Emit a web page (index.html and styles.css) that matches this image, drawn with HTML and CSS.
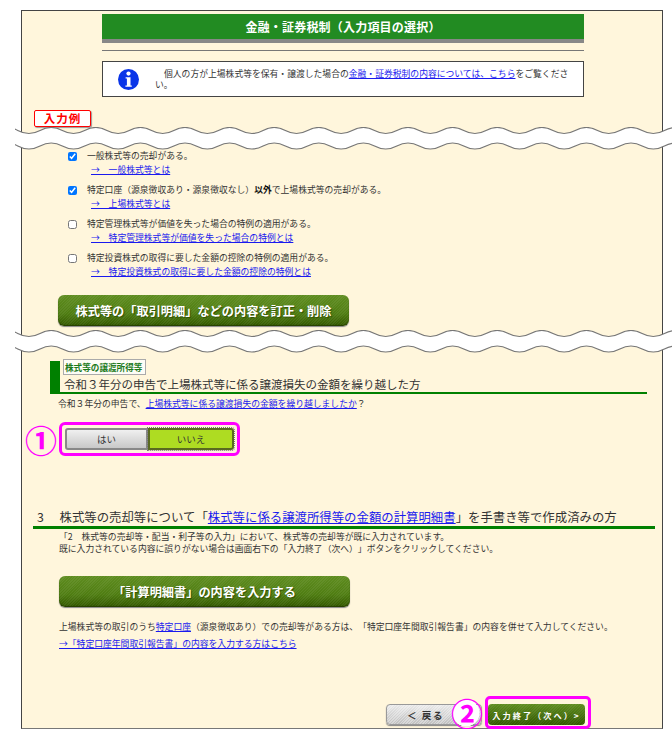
FILE: index.html
```html
<!DOCTYPE html>
<html lang="ja">
<head>
<meta charset="utf-8">
<title>金融・証券税制（入力項目の選択）</title>
<link rel="stylesheet" href="styles.css">
</head>
<body>
<main class="panel">
  <h1 class="title">金融・証券税制（入力項目の選択）</h1>
  <div class="rule"></div>
  <div class="info">
    <svg class="info-icon" viewBox="0 0 21 21" aria-hidden="true">
      <circle cx="10.5" cy="10.5" r="10.5" fill="#0a35e8"/>
      <circle cx="10.5" cy="4.6" r="2.1" fill="#fff"/>
      <path d="M7.6 8.2h4.9v8.2h1.3v1.4H7.4v-1.4h1.5V9.6H7.6z" fill="#fff"/>
    </svg>
    <p class="info-text">個人の方が上場株式等を保有・譲渡した場合の<a href="#">金融・証券税制の内容については、こちら</a>をご覧ください。</p>
  </div>
  <div class="example">入力例</div>

  <svg class="wave" viewBox="15 0 657 23" aria-hidden="true">
    <path class="wave-fill" d="M-4.55 3.5q11.15-6 22.3 0t22.3 0t22.3 0t22.3 0t22.3 0t22.3 0t22.3 0t22.3 0t22.3 0t22.3 0t22.3 0t22.3 0t22.3 0t22.3 0t22.3 0t22.3 0t22.3 0t22.3 0t22.3 0t22.3 0t22.3 0t22.3 0t22.3 0t22.3 0t22.3 0t22.3 0t22.3 0t22.3 0t22.3 0t22.3 0t22.3 0t22.3 0V19q-11.15 6-22.3 0t-22.3 0t-22.3 0t-22.3 0t-22.3 0t-22.3 0t-22.3 0t-22.3 0t-22.3 0t-22.3 0t-22.3 0t-22.3 0t-22.3 0t-22.3 0t-22.3 0t-22.3 0t-22.3 0t-22.3 0t-22.3 0t-22.3 0t-22.3 0t-22.3 0t-22.3 0t-22.3 0t-22.3 0t-22.3 0t-22.3 0t-22.3 0t-22.3 0t-22.3 0t-22.3 0t-22.3 0z"/>
    <path class="wave-line" d="M-4.55 3.5q11.15-6 22.3 0t22.3 0t22.3 0t22.3 0t22.3 0t22.3 0t22.3 0t22.3 0t22.3 0t22.3 0t22.3 0t22.3 0t22.3 0t22.3 0t22.3 0t22.3 0t22.3 0t22.3 0t22.3 0t22.3 0t22.3 0t22.3 0t22.3 0t22.3 0t22.3 0t22.3 0t22.3 0t22.3 0t22.3 0t22.3 0t22.3 0t22.3 0"/>
    <path class="wave-line" d="M-4.55 19q11.15-6 22.3 0t22.3 0t22.3 0t22.3 0t22.3 0t22.3 0t22.3 0t22.3 0t22.3 0t22.3 0t22.3 0t22.3 0t22.3 0t22.3 0t22.3 0t22.3 0t22.3 0t22.3 0t22.3 0t22.3 0t22.3 0t22.3 0t22.3 0t22.3 0t22.3 0t22.3 0t22.3 0t22.3 0t22.3 0t22.3 0t22.3 0t22.3 0"/>
  </svg>

  <ul class="checks">
    <li class="check">
      <input type="checkbox" checked>
      <div class="check-body">
        <div class="line">一般株式等の売却がある。</div>
        <div class="line sub-link"><a href="#">→　一般株式等とは</a></div>
      </div>
    </li>
    <li class="check">
      <input type="checkbox" checked>
      <div class="check-body">
        <div class="line">特定口座（源泉徴収あり・源泉徴収なし）<b>以外</b>で上場株式等の売却がある。</div>
        <div class="line sub-link"><a href="#">→　上場株式等とは</a></div>
      </div>
    </li>
    <li class="check">
      <input type="checkbox">
      <div class="check-body">
        <div class="line">特定管理株式等が価値を失った場合の特例の適用がある。</div>
        <div class="line sub-link"><a href="#">→　特定管理株式等が価値を失った場合の特例とは</a></div>
      </div>
    </li>
    <li class="check">
      <input type="checkbox">
      <div class="check-body">
        <div class="line">特定投資株式の取得に要した金額の控除の特例の適用がある。</div>
        <div class="line sub-link"><a href="#">→　特定投資株式の取得に要した金額の控除の特例とは</a></div>
      </div>
    </li>
  </ul>

  <button class="big-btn first-btn">株式等の「取引明細」などの内容を訂正・削除</button>

  <svg class="wave wave-two" viewBox="15 0 657 23" aria-hidden="true">
    <path class="wave-fill" d="M-4.55 3.5q11.15-6 22.3 0t22.3 0t22.3 0t22.3 0t22.3 0t22.3 0t22.3 0t22.3 0t22.3 0t22.3 0t22.3 0t22.3 0t22.3 0t22.3 0t22.3 0t22.3 0t22.3 0t22.3 0t22.3 0t22.3 0t22.3 0t22.3 0t22.3 0t22.3 0t22.3 0t22.3 0t22.3 0t22.3 0t22.3 0t22.3 0t22.3 0t22.3 0V19q-11.15 6-22.3 0t-22.3 0t-22.3 0t-22.3 0t-22.3 0t-22.3 0t-22.3 0t-22.3 0t-22.3 0t-22.3 0t-22.3 0t-22.3 0t-22.3 0t-22.3 0t-22.3 0t-22.3 0t-22.3 0t-22.3 0t-22.3 0t-22.3 0t-22.3 0t-22.3 0t-22.3 0t-22.3 0t-22.3 0t-22.3 0t-22.3 0t-22.3 0t-22.3 0t-22.3 0t-22.3 0t-22.3 0z"/>
    <path class="wave-line" d="M-4.55 3.5q11.15-6 22.3 0t22.3 0t22.3 0t22.3 0t22.3 0t22.3 0t22.3 0t22.3 0t22.3 0t22.3 0t22.3 0t22.3 0t22.3 0t22.3 0t22.3 0t22.3 0t22.3 0t22.3 0t22.3 0t22.3 0t22.3 0t22.3 0t22.3 0t22.3 0t22.3 0t22.3 0t22.3 0t22.3 0t22.3 0t22.3 0t22.3 0t22.3 0"/>
    <path class="wave-line" d="M-4.55 19q11.15-6 22.3 0t22.3 0t22.3 0t22.3 0t22.3 0t22.3 0t22.3 0t22.3 0t22.3 0t22.3 0t22.3 0t22.3 0t22.3 0t22.3 0t22.3 0t22.3 0t22.3 0t22.3 0t22.3 0t22.3 0t22.3 0t22.3 0t22.3 0t22.3 0t22.3 0t22.3 0t22.3 0t22.3 0t22.3 0t22.3 0t22.3 0t22.3 0"/>
  </svg>

  <section class="carry">
    <div class="carry-label">株式等の譲渡所得等</div>
    <h2 class="carry-title">令和３年分の申告で上場株式等に係る譲渡損失の金額を繰り越した方</h2>
  </section>
  <p class="carry-q">令和３年分の申告で、<a href="#">上場株式等に係る譲渡損失の金額を繰り越しましたか</a>？</p>

  <div class="choice-row">
    <span class="mark">①</span>
    <div class="choice-frame">
      <button class="choice choice-no">はい</button>
      <button class="choice choice-yes">いいえ</button>
    </div>
  </div>

  <h2 class="section-title"><span class="section-num">3</span>株式等の売却等について「<a href="#">株式等に係る譲渡所得等の金額の計算明細書</a>」を手書き等で作成済みの方</h2>
  <p class="note">「2　株式等の売却等・配当・利子等の入力」において、株式等の売却等が既に入力されています。<br>既に入力されている内容に誤りがない場合は画面右下の「入力終了（次へ）」ボタンをクリックしてください。</p>
  <button class="big-btn second-btn">「計算明細書」の内容を入力する</button>
  <p class="note note-two">上場株式等の取引のうち<a href="#">特定口座</a>（源泉徴収あり）での売却等がある方は、「特定口座年間取引報告書」の内容を併せて入力してください。</p>
  <p class="note note-three"><a href="#">→「特定口座年間取引報告書」の内容を入力する方はこちら</a></p>

  <div class="actions">
    <button class="back-btn">＜ 戻る</button>
    <span class="mark mark-two">②</span>
    <div class="next-frame">
      <button class="next-btn">入力終了（次へ）&gt;</button>
    </div>
  </div>
</main>
</body>
</html>
```

FILE: styles.css
```css
* { box-sizing: border-box; }
html, body { margin: 0; padding: 0; background: #fff; }
body {
  padding-top: 10px;
  font-family: "Noto Sans CJK JP", "Liberation Sans", sans-serif;
  font-size: 8.8px;
  line-height: 12px;
  color: #333;
  text-spacing-trim: space-all;
}
a { color: #1a1aee; text-decoration: underline; }
p, h1, h2, ul { margin: 0; padding: 0; }
button { font-family: inherit; cursor: pointer; padding: 0; }

.panel {
  margin-left: 21px;
  width: 642px;
  height: 719px;
  border: 1px solid #444;
  border-bottom-color: #777;
  background: #fff6dc;
  padding: 3px 0;
}
.title {
  margin-left: 80px;
  width: 482px;
  height: 29px;
  background: #228b22;
  border-bottom: 4px solid #888;
  color: #fff;
  font-size: 12px;
  letter-spacing: .2px;
  line-height: 25px;
  font-weight: 700;
  text-align: center;
}
.rule {
  margin: 7px 0 0 80px;
  width: 482px;
  height: 1px;
  background: #777;
}
.info {
  margin: 10px 0 0 80px;
  width: 482px;
  height: 36px;
  background: #fff;
  border: 1px solid #444;
  display: flex;
  align-items: center;
  padding: 0 14px 0 15px;
}
.info-icon { width: 21px; height: 21px; flex: none; margin-right: 16px; }
.info-text { text-indent: 9px; line-height: 11px; }
.example {
  margin: 13px 0 0 12px;
  width: 57px;
  height: 17px;
  background: #fff;
  border: 1px solid #f00;
  border-radius: 2px;
  box-shadow: 1px 1px 1px #999;
  color: #f00;
  font-size: 11.5px;
  font-weight: 700;
  line-height: 15px;
  letter-spacing: 1px;
  text-align: center;
}
.wave {
  display: block;
  position: relative;
  margin-left: -7px;
  width: 657px;
  height: 23px;
}
.wave-fill { fill: #fff; }
.wave-line { fill: none; stroke: #777; stroke-width: 1.2; }

.checks { list-style: none; display: flex; flex-direction: column; gap: 8px; margin-left: 46px; }
.check { display: flex; height: 26px; }
.check input { width: 9px; height: 9px; margin: 2px 10px 0 0; flex: none; }
.check-body { display: flex; flex-direction: column; gap: 2px; }
.line { height: 12px; white-space: nowrap; }
.sub-link { margin-left: 4px; }
.check b { color: #111; }

.big-btn {
  display: block;
  width: 291px;
  height: 31px;
  border: 0;
  border-radius: 6px;
  background:
    repeating-linear-gradient(135deg, rgba(255,255,255,.06) 0 1px, transparent 1px 2px),
    linear-gradient(#5f8d20, #4f7d12 60%, #335800);
  box-shadow: inset 0 -1px 1px #263f00, 0 1px 1px #888;
  color: #fff;
  font-size: 12.2px;
  font-weight: 700;
  text-shadow: 1px 1px 1px #2f4f00;
}
.first-btn { margin: 17px 0 0 36px; }
.wave-two { margin-top: 4px; }

.carry {
  display: flow-root;
  margin: 8px 0 0 28px;
  width: 597px;
  height: 33px;
  border-left: 10px solid #008000;
  border-bottom: 2px solid #008000;
  padding-left: 3px;
}
.carry-label {
  margin-top: -2px;
  width: 83px;
  height: 16px;
  background: #fdfdf6;
  border: 1px solid #aaa;
  color: #1a7a1a;
  font-size: 8.6px;
  font-weight: 700;
  line-height: 14px;
  padding-left: 1px;
  white-space: nowrap;
}
.carry-title {
  margin: 1px 0 0 1px;
  font-size: 11.5px;
  font-weight: 400;
  line-height: 16px;
  white-space: nowrap;
}
.carry-q { margin: 4px 0 0 36px; }

.choice-row { display: flex; margin: 12px 0 0 3px; }
.mark {
  flex: none;
  width: 34px;
  color: #f0f;
  font-size: 32px;
  line-height: 34px;
  font-weight: 700;
}
.choice-frame {
  display: flex;
  width: 181px;
  height: 34px;
  border: 3px solid #f0f;
  border-radius: 6px;
  padding: 3px;
}
.choice {
  height: 22px;
  font-size: 9.5px;
  color: #333;
  border: 2px solid #888;
}
.choice-no {
  width: 83px;
  border-radius: 3px 0 0 3px;
  background: linear-gradient(#f0f0f0, #c8c8c8);
}
.choice-yes {
  width: 86px;
  border-radius: 0 3px 3px 0;
  border-color: #5a6a20;
  background: #aedc22;
  outline: 1px dotted #777;
}

.section-title {
  margin: 53px 0 0 11px;
  width: 622px;
  height: 20px;
  border-bottom: 3px solid #008000;
  padding: 0 0 0 4px;
  font-size: 12.4px;
  font-weight: 400;
  line-height: 16px;
  white-space: nowrap;
}
.section-num { display: inline-block; width: 22.5px; }
.note { margin: 2px 0 0 37px; white-space: nowrap; }
.second-btn { margin: 21px 0 0 37px; }
.note-two { margin-top: 14px; }
.note-three { margin-top: 5px; }

.actions {
  position: relative;
  display: flex;
  justify-content: flex-end;
  align-items: flex-start;
  gap: 3px;
  margin-top: 54px;
  padding-right: 71px;
}
.back-btn {
  width: 96px;
  height: 21px;
  border: 1px solid #999;
  border-radius: 4px;
  background:
    repeating-linear-gradient(135deg, rgba(255,255,255,.35) 0 1px, transparent 1px 2px),
    linear-gradient(#e8e8e8, #c0c0c0);
  box-shadow: 0 1px 1px #888;
  color: #333;
  font-size: 9.5px;
  font-weight: 700;
  letter-spacing: 1.6px;
  text-align: left;
  padding-left: 20px;
}
.mark-two {
  position: absolute;
  left: 429px;
  top: -6px;
  width: 30px;
  height: 30px;
  line-height: 28px;
  font-size: 32px;
  text-align: center;
  border-radius: 50%;
  background: radial-gradient(circle, #fff 0 62%, transparent 64%);
}
.next-frame {
  margin-top: -8px;
  margin-bottom: -4px;
  width: 106px;
  height: 33px;
  border: 3px solid #f0f;
  border-radius: 5px;
  padding: 5px 3px 1px 0;
}
.next-btn {
  display: block;
  width: 97px;
  height: 21px;
  border: 0;
  border-radius: 4px;
  background:
    repeating-linear-gradient(135deg, rgba(255,255,255,.06) 0 1px, transparent 1px 2px),
    linear-gradient(#5f8d20, #335800);
  color: #fff;
  font-size: 8.2px;
  font-weight: 700;
  letter-spacing: 2px;
  white-space: nowrap;
}
```
